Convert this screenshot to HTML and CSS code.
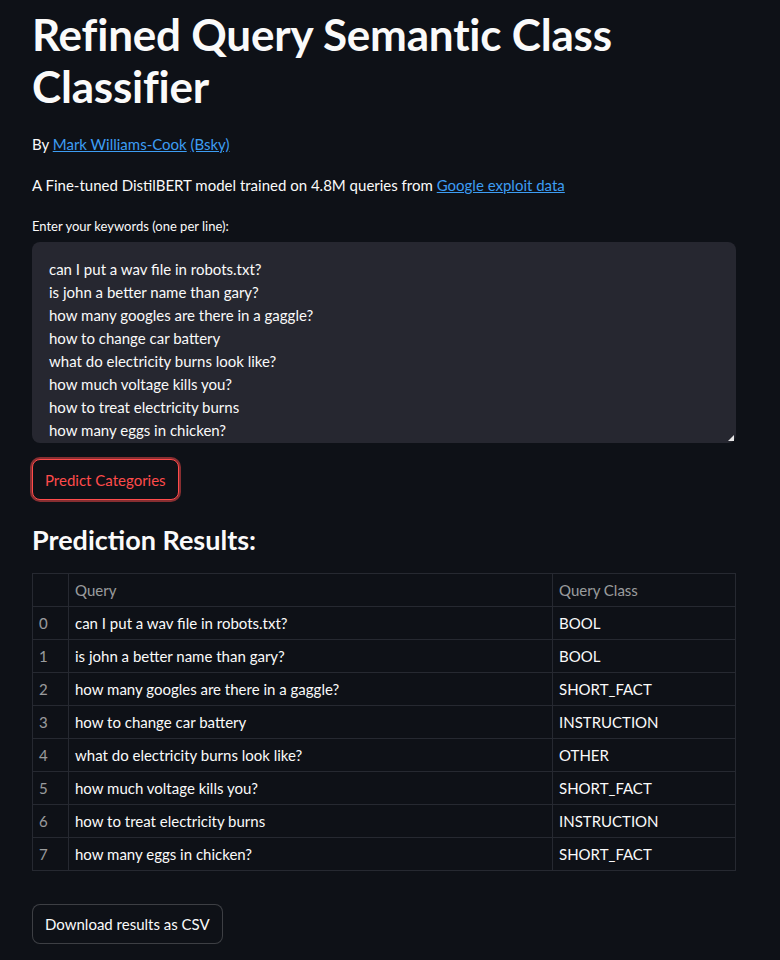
FILE: index.html
```html
<!DOCTYPE html>
<html>
<head>
<meta charset="utf-8">
<link rel="stylesheet" href="styles.css">
</head>
<body>
<main class="app">
  <h1 class="title">Refined Query Semantic Class Classifier</h1>
  <p class="byline">By <a href="#">Mark Williams-Cook</a> <a href="#">(Bsky)</a></p>
  <p class="desc">A Fine-tuned DistilBERT model trained on 4.8M queries from <a href="#">Google exploit data</a></p>
  <label class="label">Enter your keywords (one per line):</label>
  <div class="textarea">
    <div>can I put a wav file in robots.txt?</div>
    <div>is john a better name than gary?</div>
    <div>how many googles are there in a gaggle?</div>
    <div>how to change car battery</div>
    <div>what do electricity burns look like?</div>
    <div>how much voltage kills you?</div>
    <div>how to treat electricity burns</div>
    <div>how many eggs in chicken?</div>
    <span class="grip"></span>
  </div>
  <button class="btn-primary">Predict Categories</button>
  <h3 class="results">Prediction Results:</h3>
  <table class="grid">
    <thead>
      <tr><th class="idx"></th><th class="q">Query</th><th class="c">Query Class</th></tr>
    </thead>
    <tbody>
      <tr><td class="idx">0</td><td>can I put a wav file in robots.txt?</td><td>BOOL</td></tr>
      <tr><td class="idx">1</td><td>is john a better name than gary?</td><td>BOOL</td></tr>
      <tr><td class="idx">2</td><td>how many googles are there in a gaggle?</td><td>SHORT_FACT</td></tr>
      <tr><td class="idx">3</td><td>how to change car battery</td><td>INSTRUCTION</td></tr>
      <tr><td class="idx">4</td><td>what do electricity burns look like?</td><td>OTHER</td></tr>
      <tr><td class="idx">5</td><td>how much voltage kills you?</td><td>SHORT_FACT</td></tr>
      <tr><td class="idx">6</td><td>how to treat electricity burns</td><td>INSTRUCTION</td></tr>
      <tr><td class="idx">7</td><td>how many eggs in chicken?</td><td>SHORT_FACT</td></tr>
    </tbody>
  </table>
  <button class="btn-secondary">Download results as CSV</button>
</main>
</body>
</html>
```
FILE: styles.css
```css
html, body {
  margin: 0;
  padding: 0;
  background: #0e1117;
}
body {
  color: #fafafa;
  font-family: Lato, "Source Sans Pro", "Liberation Sans", sans-serif;
  font-size: 15px;
}
.app {
  width: 704px;
  padding: 0 32px;
  display: flex;
  flex-direction: column;
  align-items: flex-start;
}
.title {
  margin: 8px 0 0;
  font-size: 44px;
  line-height: 52px;
  font-weight: 700;
  letter-spacing: -0.2px;
}
.byline {
  margin: 20px 0 0;
  line-height: 24px;
}
.desc {
  margin: 17px 0 0;
  line-height: 24px;
}
a {
  color: #3d9df3;
  text-decoration: underline;
}
.label {
  margin-top: 20px;
  font-size: 13px;
  line-height: 18px;
}
.textarea {
  position: relative;
  margin-top: 7px;
  box-sizing: border-box;
  width: 704px;
  height: 201px;
  background: #262730;
  border-radius: 8px;
  padding: 16px 17px;
  font-size: 15px;
  line-height: 23px;
}
.grip {
  position: absolute;
  right: 2px;
  bottom: 2px;
  width: 0;
  height: 0;
  border-left: 6px solid transparent;
  border-bottom: 6px solid #e6e6e6;
}
.btn-primary {
  margin-top: 16px;
  height: 41px;
  padding: 0 12px;
  background: #0e1117;
  color: #ff4b4b;
  border: 1px solid #ff4b4b;
  border-radius: 8px;
  box-shadow: 0 0 0 2px rgba(255, 75, 75, 0.5);
  font-family: inherit;
  font-size: 15px;
}
.results {
  margin: 23px 0 0;
  font-size: 27px;
  line-height: 34px;
  font-weight: 700;
}
.grid {
  margin-top: 16px;
  width: 704px;
  border-collapse: collapse;
  font-size: 15px;
}
.grid th, .grid td {
  border: 1px solid #262931;
  height: 32px;
  padding: 0 6px;
  text-align: left;
  font-weight: 400;
}
.grid th {
  color: rgba(250, 250, 250, 0.6);
}
.grid .idx {
  width: 23px;
  color: rgba(250, 250, 250, 0.6);
}
.grid .c {
  width: 170px;
}
.btn-secondary {
  margin-top: 33px;
  height: 40px;
  padding: 0 12px;
  background: #0e1117;
  color: #fafafa;
  border: 1px solid rgba(250, 250, 250, 0.2);
  border-radius: 8px;
  font-family: inherit;
  font-size: 15px;
}
```
